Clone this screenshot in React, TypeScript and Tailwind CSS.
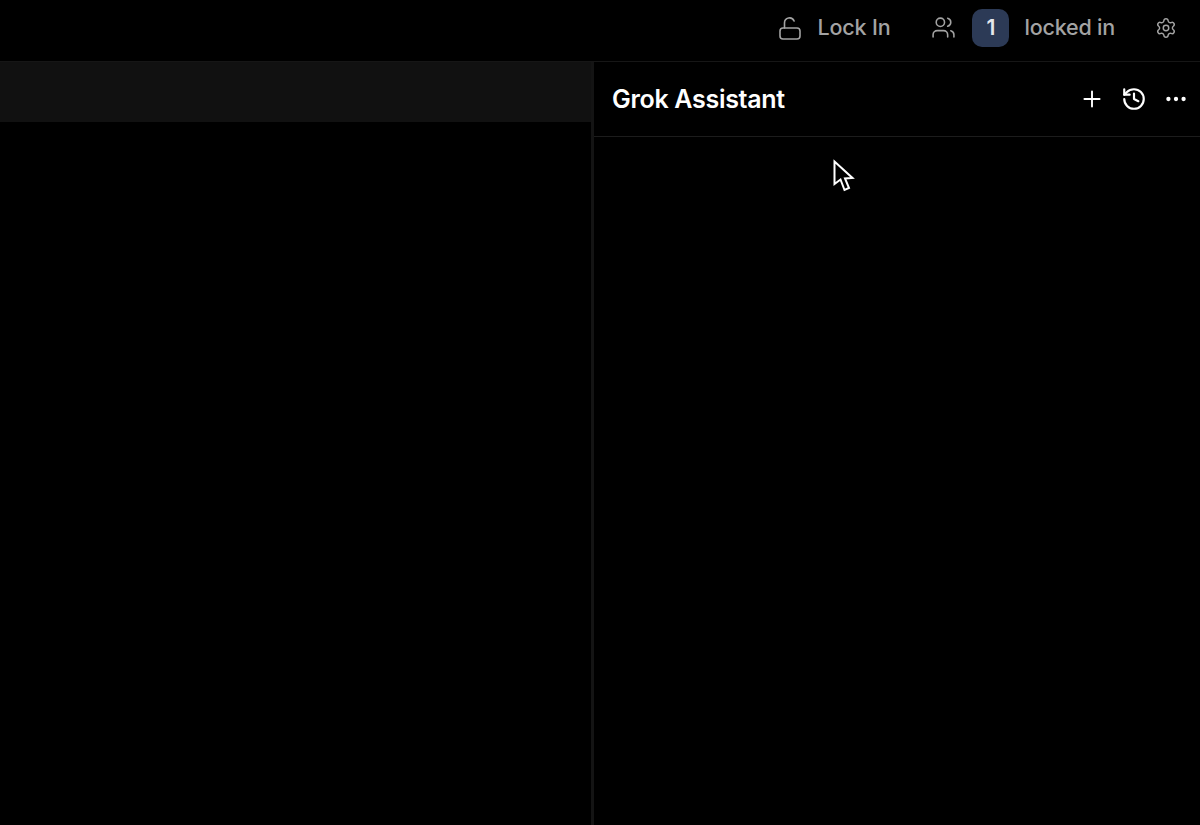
import { Users, Settings, Plus, History, MoreHorizontal } from "lucide-react";

function LockOpen() {
  return (
    <svg width="24" height="24" viewBox="0 0 24 24" fill="none" stroke="#a3a3a3" strokeWidth="1.6" strokeLinecap="round" strokeLinejoin="round">
      <rect x="2" y="12" width="20" height="11" rx="3" />
      <path d="M6.5 12V7a5 5 0 0 1 9.6-2" />
    </svg>
  );
}

function Cursor() {
  return (
    <svg className="absolute left-[832px] top-[159px]" width="23" height="34" viewBox="0 0 23 34" fill="#000" stroke="#fff" strokeWidth="2">
      <path d="M2.5 2.5 L2.5 25 L8.5 20.5 L12.5 31 L17 29 L13 19.5 L20.5 19 Z" />
    </svg>
  );
}

export default function App() {
  return (
    <div className="relative h-[825px] w-[1200px] overflow-hidden bg-black font-['Inter',sans-serif]">
      {/* top bar */}
      <header className="flex h-[61px] items-center justify-end pb-[6px] text-[#a3a3a3]">
        <div className="flex items-center">
          <LockOpen />
          <span className="ml-[15px] text-[21.5px] font-medium tracking-[-0.15px]">Lock In</span>
        </div>
        <Users className="ml-[41px]" size={25} strokeWidth={1.5} />
        <div className="ml-[16px] flex h-[38px] w-[37px] items-center justify-center rounded-[10px] bg-[#2c3a56] text-[21px] font-semibold text-[#e5e7eb]">
          1
        </div>
        <span className="ml-[15px] text-[21.5px] font-medium tracking-[-0.2px]">locked in</span>
        <Settings className="ml-[40px] mr-[23px]" size={22} strokeWidth={1.6} />
      </header>

      <div className="flex h-[764px] border-t border-[#161616]">
        {/* left pane */}
        <main className="w-[591px] shrink-0">
          <div className="h-[60px] bg-[#111111]" />
        </main>
        <div className="w-[3px] shrink-0 bg-[#141414]" />

        {/* assistant panel */}
        <aside className="flex-1">
          <div className="flex h-[75px] items-center justify-between border-b border-[#1c1c1c] pl-[18px] pr-[11px]">
            <h1 className="pt-[2px] text-[25px] font-semibold tracking-[-0.3px] text-white">Grok Assistant</h1>
            <div className="flex items-center gap-[16px] text-white">
              <Plus size={26} strokeWidth={1.75} />
              <History size={26} strokeWidth={2} />
              <MoreHorizontal size={26} strokeWidth={2} />
            </div>
          </div>
        </aside>
      </div>

      <Cursor />
    </div>
  );
}
